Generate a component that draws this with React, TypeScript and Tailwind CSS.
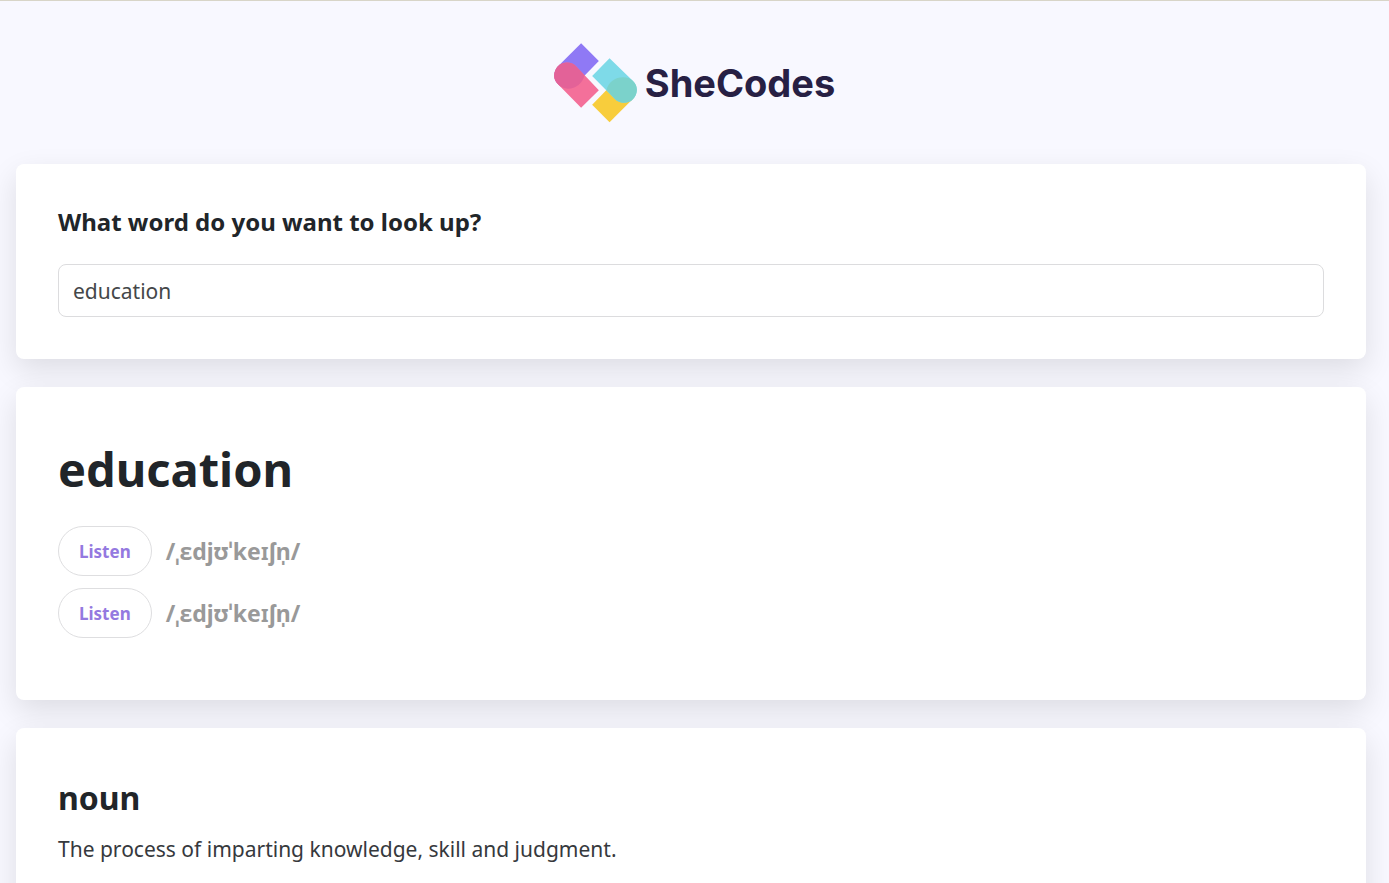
import { useState, type ReactNode } from "react";

const phonetics = ["/ˌɛdjʊˈkeɪʃn̩/", "/ˌɛdjʊˈkeɪʃn̩/"];

function Logo() {
  return (
    <a href="#home" className="flex items-center gap-2" aria-label="SheCodes">
      <svg viewBox="46 38 248 238" className="h-20 w-[83px]" aria-hidden="true">
        <path d="M127 38 180 91 112 161A38 38 0 0 1 58 107Z" fill="#8f79f5" />
        <path d="M112 107 180 179 127 231 58 161A38 38 0 0 1 112 107Z" fill="#f4709a" />
        <path
          d="M58 161A38 38 0 0 1 85 96C98 96 106 101 112 107L137 134C132 158 111 174 88 174C76 174 66 169 58 161Z"
          fill="#e36298"
        />
        <path d="M229 151 160 222 212 274 282 204Z" fill="#f8cd3c" />
        <path d="M212 83 160 136 228 205A38 38 0 0 0 282 151Z" fill="#7edae8" />
        <path
          d="M282 151A38 38 0 0 1 255 216C242 216 234 211 228 205L203 179C208 154 229 140 252 140C264 140 274 143 282 151Z"
          fill="#7bd2cb"
        />
      </svg>
      <span className="font-[Inter,sans-serif] text-[38px] leading-none font-bold text-[#272044]">
        SheCodes
      </span>
    </a>
  );
}

function Card({ children, className }: { children: ReactNode; className: string }) {
  return (
    <section
      className={`rounded-lg bg-white px-[42px] shadow-[0_11px_30px_rgba(0,0,0,0.11)] ${className}`}
    >
      {children}
    </section>
  );
}

export default function App() {
  const [word, setWord] = useState("education");

  return (
    <div className="min-h-screen border-t border-[#d8d5c8] bg-[#f8f8ff] font-['Noto_Sans','Open_Sans',sans-serif] text-[#212529]">
      <header className="flex justify-center pt-[42px] pb-[41px]">
        <Logo />
      </header>
      <main className="mr-[23px] ml-4 flex flex-col gap-7">
        <Card className="pt-10 pb-[42px]">
          <form onSubmit={(event) => event.preventDefault()}>
            <label htmlFor="word" className="block text-2xl leading-9 font-bold">
              What word do you want to look up?
            </label>
            <input
              id="word"
              type="search"
              value={word}
              onChange={(event) => setWord(event.target.value)}
              className="mt-6 block h-[53px] w-full appearance-none rounded-lg border border-[#dcdcde] bg-white px-3.5 text-[21px] text-[#444749] outline-none"
            />
          </form>
        </Card>
        <Card className="pt-[52px] pb-[62px]">
          <h1 className="text-[47px] leading-[60px] font-bold">education</h1>
          <ul className="mt-[27px] flex flex-col gap-3">
            {phonetics.map((text, index) => (
              <li key={index} className="flex items-center gap-3.5">
                <button
                  type="button"
                  className="h-[50px] rounded-full border border-[#dedee0] px-5 pt-0.5 text-[17px] font-bold text-[#9479e0]"
                >
                  Listen
                </button>
                <span className="text-[23px] leading-8 font-bold text-[#999]">{text}</span>
              </li>
            ))}
          </ul>
        </Card>
        <Card className="pt-[50px] pb-[42px]">
          <h2 className="text-[32px] leading-10 font-bold">noun</h2>
          <p className="mt-[15px] text-[21px] leading-8 text-[#36393d]">
            The process of imparting knowledge, skill and judgment.
          </p>
        </Card>
      </main>
    </div>
  );
}
